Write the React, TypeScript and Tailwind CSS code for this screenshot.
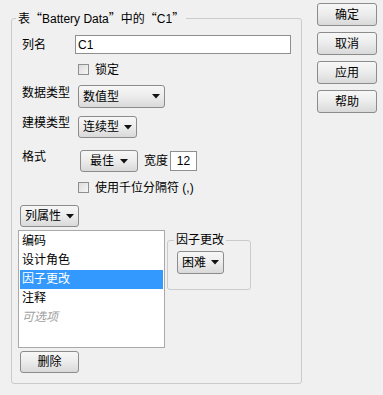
import React from 'react'

const font = { fontFamily: '"Liberation Sans", "Noto Sans CJK SC", sans-serif' }
const cjk = { fontFamily: '"Noto Sans CJK SC", sans-serif' }

function Arrow() {
  return (
    <svg width="8" height="5" viewBox="0 0 8 5" className="shrink-0">
      <path d="M0 0 H8 L4 4.5 Z" fill="#111" />
    </svg>
  )
}

function Btn({ children, className = '' }: { children: React.ReactNode; className?: string }) {
  return (
    <div
      className={`flex items-center justify-center rounded-[3px] border border-[#8c8c8c] bg-linear-to-b from-[#f7f7f7] via-[#ececec] to-[#d9d9d9] text-[12px] leading-[14px] text-black ${className}`}
    >
      {children}
    </div>
  )
}

function Drop({ label, className = '' }: { label: string; className?: string }) {
  return (
    <Btn className={`justify-between! px-[4px] ${className}`}>
      <span>{label}</span>
      <Arrow />
    </Btn>
  )
}

function Check({ label }: { label: string }) {
  return (
    <div className="flex h-[13px] items-center gap-[6px] text-[12px] leading-[14px]">
      <div className="h-[11px] w-[11px] border border-[#8e8f8f] bg-linear-to-br from-[#dcdcdc] to-[#f6f6f6]" />
      <span>{label}</span>
    </div>
  )
}

export default function App() {
  return (
    <div className="flex h-[395px] w-[383px] bg-[#f0f0f0] text-black" style={font}>
      <fieldset className="mt-[10px] ml-[11px] h-[374px] w-[291px] rounded-[3px] border border-[#cbcbcb]">
        <legend className="ml-[4px] px-[2px] text-[12px] leading-[16px]">
          表<span style={cjk}>“</span>Battery Data<span style={cjk}>”</span>中的<span style={cjk}>“</span>C1<span style={cjk}>”</span>
        </legend>
        <div className="flex flex-col pl-[6px] text-[12px] leading-[14px]">
          <div className="mt-[8px] flex h-[19px] items-center">
            <span className="ml-[4px] w-[53px]">列名</span>
            <div className="flex h-[19px] w-[216px] items-center border border-[#8f8f8f] bg-white pl-[2px]">C1</div>
          </div>
          <div className="mt-[9px] ml-[60px]">
            <Check label="锁定" />
          </div>
          <div className="mt-[9px] flex h-[23px] items-start">
            <span className="mt-[1px] ml-[4px] w-[56px]">数据类型</span>
            <Drop label="数值型" className="h-[23px] w-[87px]" />
          </div>
          <div className="mt-[8px] flex h-[22px] items-start">
            <span className="ml-[4px] w-[56px]">建模类型</span>
            <Drop label="连续型" className="h-[22px] w-[59px]" />
          </div>
          <div className="mt-[12px] flex h-[22px] items-start">
            <span className="ml-[4px] w-[58px]">格式</span>
            <Drop label="最佳" className="h-[22px] w-[58px] justify-center! gap-[6px]" />
            <span className="mt-[4px] ml-[6px]">宽度</span>
            <div className="mt-[1px] ml-[2px] flex h-[20px] w-[27px] items-center justify-center border border-[#8f8f8f] bg-white">
              12
            </div>
          </div>
          <div className="mt-[9px] ml-[60px]">
            <Check label="使用千位分隔符 (,)" />
          </div>
          <div className="mt-[11px] ml-[2px]">
            <Drop label="列属性" className="h-[22px] w-[59px]" />
          </div>
          <div className="mt-[3px] flex items-start">
            <div className="flex h-[118px] w-[147px] flex-col border border-[#a9a9a9] bg-white p-[1px]">
              <div className="h-[19px] pl-[2px] leading-[19px]">编码</div>
              <div className="h-[19px] pl-[2px] leading-[19px]">设计角色</div>
              <div className="h-[19px] bg-[#3399ff] pl-[2px] leading-[19px] text-white">因子更改</div>
              <div className="h-[19px] pl-[2px] leading-[19px]">注释</div>
              <div className="h-[19px] pl-[2px] leading-[19px] text-[#a0a0a0] italic">可选项</div>
            </div>
            <fieldset className="mt-[2px] ml-[2px] h-[58px] w-[84px] rounded-[3px] border border-[#cbcbcb]">
              <legend className="ml-[6px] px-[2px] leading-[16px]">因子更改</legend>
              <Drop label="困难" className="mt-[3px] ml-[9px] h-[23px] w-[47px]" />
            </fieldset>
          </div>
          <div className="mt-[3px] ml-[2px]">
            <Btn className="h-[22px] w-[59px]">删除</Btn>
          </div>
        </div>
      </fieldset>
      <div className="mt-[3px] ml-[15px] flex flex-col gap-[6px]">
        <Btn className="h-[23px] w-[60px]">确定</Btn>
        <Btn className="h-[23px] w-[60px]">取消</Btn>
        <Btn className="h-[23px] w-[60px]">应用</Btn>
        <Btn className="h-[23px] w-[60px]">帮助</Btn>
      </div>
    </div>
  )
}
